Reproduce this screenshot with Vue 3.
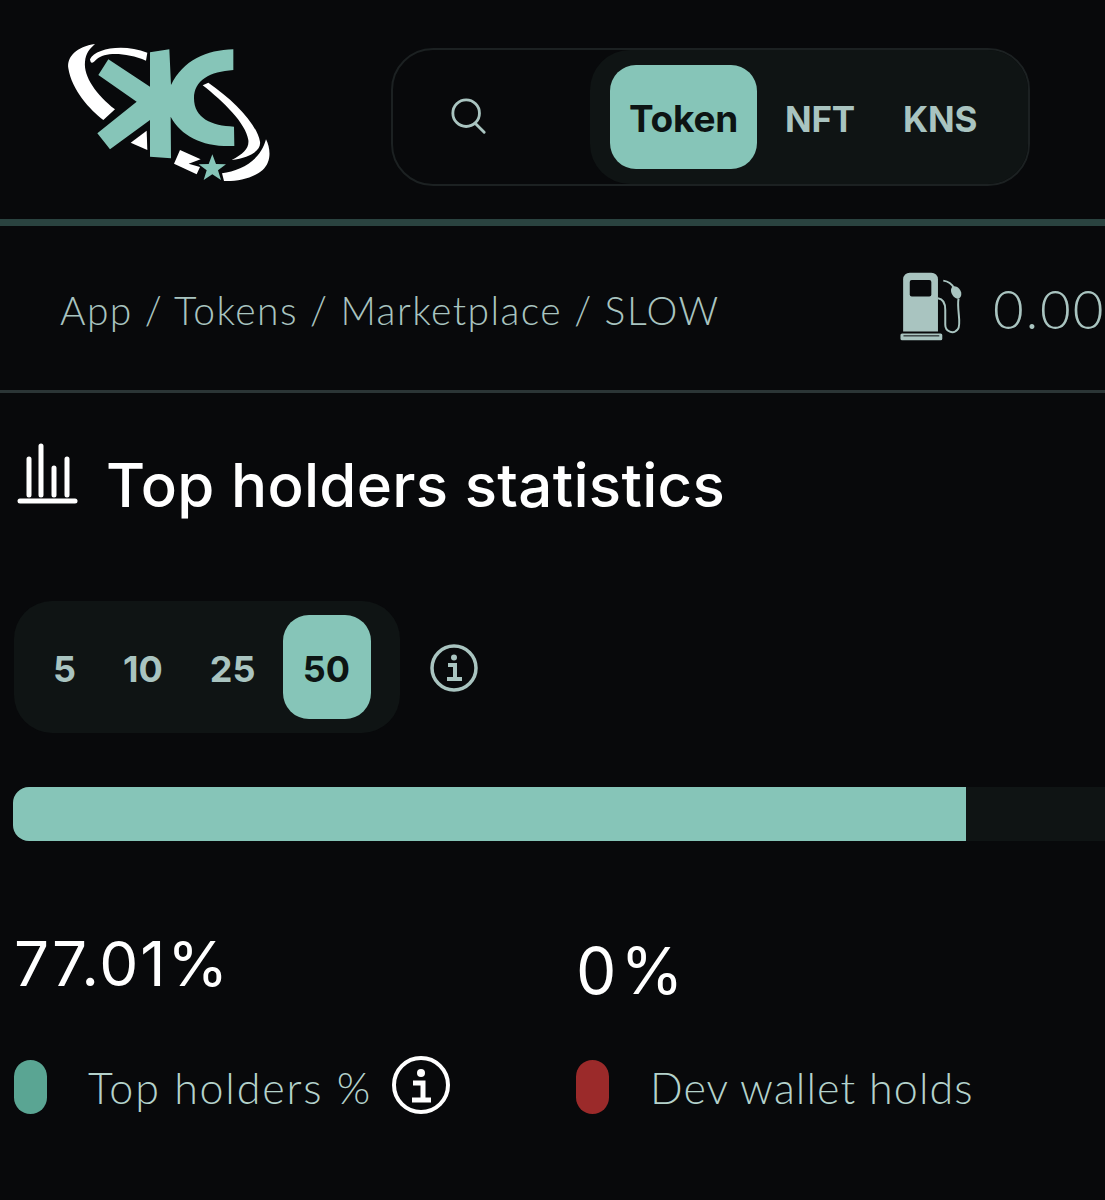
<script setup>
const tabs = [
  { label: 'Token', active: true },
  { label: 'NFT', active: false },
  { label: 'KNS', active: false }
]
const counts = [
  { label: '5', active: false },
  { label: '10', active: false },
  { label: '25', active: false },
  { label: '50', active: true }
]
const crumbs = 'App / Tokens / Marketplace / SLOW'
const progress = 87.27
</script>

<template>
  <div class="page">
    <header class="header">
      <svg class="logo" viewBox="0 0 780 570" aria-label="Logo">
        <g fill="#fff">
          <path d="M165 72C110 80 80 110 85 145C95 210 150 270 190 300L225 268C170 225 130 170 135 125C137 100 150 85 165 72Z" />
          <path d="M150 118C165 85 250 70 322 98L318 122C260 98 195 95 170 118C160 128 152 135 150 118Z" />
          <path d="M488 196L505 188C580 240 650 310 660 365C664 392 630 412 575 420C610 402 628 385 625 360C618 310 550 245 488 196Z" />
          <path d="M678 358C692 385 695 425 668 450C640 475 590 485 552 483L546 460C600 452 660 425 678 358Z" />
          <path d="M320 332L322 390L272 368Z" />
          <path d="M420 390L482 418L446 431L480 441L470 463L402 431Z" />
        </g>
        <g fill="#86c5b8">
          <path d="M205 118L330 200L330 97L388 88L393 195C430 120 500 90 580 88L580 150C510 155 462 180 462 235C462 295 515 318 582 320L583 378C490 382 425 350 392 290L393 415L330 410L330 300L210 388L172 340L290 245L175 165Z" />
          <path d="M517 403L528 432L558 433L534 451L543 480L517 463L491 480L500 451L476 433L506 432Z" />
        </g>
      </svg>

      <div class="searchbar">
        <div class="search-field">
          <svg class="search-icon" viewBox="0 0 40 40" fill="none" stroke="#a9c4c0" stroke-width="3" stroke-linecap="round">
            <circle cx="17" cy="16" r="14" />
            <path d="M27 27L36 36" />
          </svg>
        </div>
        <div class="tabs">
          <button v-for="tab in tabs" :key="tab.label" class="tab" :class="{ active: tab.active }">{{ tab.label }}</button>
        </div>
      </div>
    </header>

    <div class="crumbbar">
      <span class="crumbs">{{ crumbs }}</span>
      <div class="gas">
        <svg class="pump" viewBox="50 60 195 220">
          <path fill="#a9c4c0" d="M85 68H150A20 20 0 0 1 170 88V245H65V88A20 20 0 0 1 85 68Z" />
          <rect x="85" y="90" width="65" height="50" rx="6" fill="#08090b" />
          <rect x="57" y="251" width="126" height="21" rx="5" fill="#a9c4c0" />
          <rect x="66" y="257" width="108" height="3" fill="#08090b" />
          <path fill="none" stroke="#a9c4c0" stroke-width="6" d="M186 92C200 94 212 102 218 114M170 145C184 147 192 160 192 180V225C192 245 216 256 230 238C242 222 226 180 232 146" />
          <path fill="#a9c4c0" d="M212 112C222 104 236 114 240 128C242 142 234 148 226 146C214 142 204 122 212 112Z" />
        </svg>
        <span class="gas-value">0.00</span>
      </div>
    </div>

    <main class="content">
      <div class="title-row">
        <svg class="chart-icon" viewBox="16 443 62 62" fill="none" stroke="#fff" stroke-width="5" stroke-linecap="round">
          <path d="M29 459V495M41 446V495M54 468V495M67 459V495" />
          <path d="M20 501H75" />
        </svg>
        <h1>Top holders statistics</h1>
      </div>

      <div class="count-row">
        <div class="counts">
          <button v-for="c in counts" :key="c.label" class="count" :class="{ active: c.active }">{{ c.label }}</button>
        </div>
        <svg class="info info-muted" viewBox="0 0 48 48" fill="none">
          <circle cx="24" cy="24" r="22" stroke="#a9c4c0" stroke-width="3.5" />
          <circle cx="24" cy="13.5" r="3" fill="#a9c4c0" />
          <path d="M18 21H25V34M17 35H32" stroke="#a9c4c0" stroke-width="4" />
        </svg>
      </div>

      <div class="track">
        <div class="fill" :style="{ width: progress + '%' }"></div>
      </div>

      <div class="stats">
        <div class="stat">
          <div class="value">77.01%</div>
          <div class="legend">
            <span class="dot dot-teal"></span>
            <span class="legend-text legend-top">Top holders %</span>
            <svg class="info info-white" viewBox="0 0 58 58" fill="none">
              <circle cx="29" cy="29" r="27" stroke="#fff" stroke-width="4" />
              <circle cx="29" cy="17" r="4" fill="#fff" />
              <path d="M21 27H31V43M20 44H39" stroke="#fff" stroke-width="5" />
            </svg>
          </div>
        </div>
        <div class="stat stat-dev">
          <div class="value value-dev">0%</div>
          <div class="legend">
            <span class="dot dot-red"></span>
            <span class="legend-text legend-dev">Dev wallet holds</span>
          </div>
        </div>
      </div>
    </main>
  </div>
</template>

<style>
html, body { background: #08090b; }
</style>

<style scoped>
.page {
  width: 1105px;
  height: 1200px;
  overflow: hidden;
  background: #08090b;
  font-family: Lato, "Liberation Sans", sans-serif;
}
.header {
  display: flex;
  align-items: flex-start;
  height: 219px;
  padding: 20px 0 0 40px;
  box-sizing: border-box;
  position: relative;
}
.logo { width: 260px; height: 190px; flex: none; }
.searchbar {
  margin: 28px 0 0 91px;
  width: 639px;
  height: 138px;
  box-sizing: border-box;
  border: 2px solid #1c2122;
  border-radius: 42px;
  display: flex;
  overflow: hidden;
  flex: none;
}
.search-field {
  width: 197px;
  display: flex;
  align-items: center;
  padding-left: 57px;
  box-sizing: border-box;
  flex: none;
}
.search-icon { width: 38px; height: 38px; }
.tabs {
  flex: 1;
  display: flex;
  align-items: center;
  background: #0f1414;
  border-radius: 40px 0 0 40px;
  padding-left: 20px;
  gap: 8px;
}
.tab {
  font: 700 35px Inter, sans-serif;
  letter-spacing: -0.2px;
  color: #a9c4c0;
  background: none;
  border: 0;
  padding: 3px 20px 0;
}
.tab.active {
  width: 147px;
  height: 104px;
  padding: 3px 0 0;
  font-size: 37px;
  background: #86c5b8;
  color: #0d1413;
  border-radius: 26px;
}
.crumbbar {
  display: flex;
  align-items: center;
  justify-content: space-between;
  height: 174px;
  box-sizing: border-box;
  padding-left: 60px;
  border-top: 7px solid #2a4340;
  border-bottom: 3px solid #2b3536;
  white-space: nowrap;
}
.crumbs { font-size: 39px; font-weight: 300; color: #a9c4c0; letter-spacing: 1.45px; padding-top: 3px; }
.gas { display: flex; align-items: center; gap: 30px; margin-right: -30px; flex: none; width: 237px; }
.pump { width: 65px; height: 73px; flex: none; margin-top: -4px; }
.gas-value { font-size: 53px; font-weight: 300; color: #a9c4c0; letter-spacing: 2px; }
.content { padding: 0 0 0 14px; }
.title-row {
  display: flex;
  align-items: center;
  gap: 28px;
  margin-top: 57px;
  height: 70px;
}
.chart-icon { width: 62px; height: 62px; flex: none; margin: -7px 0 0 2px; align-self: flex-start; }
h1 {
  margin: 0;
  font: 500 60px Inter, sans-serif;
  letter-spacing: 0.3px;
  color: #fff;
}
.count-row {
  display: flex;
  align-items: center;
  gap: 30px;
  margin-top: 81px;
}
.counts {
  width: 386px;
  height: 132px;
  box-sizing: border-box;
  background: #0f1414;
  border-radius: 38px;
  display: flex;
  align-items: center;
  padding-left: 19px;
  gap: 7px;
}
.count {
  font: 700 36px Inter, sans-serif;
  color: #a9c4c0;
  background: none;
  border: 0;
  padding: 3px 20px 0;
}
.count.active {
  width: 88px;
  height: 104px;
  padding: 3px 0 0;
  background: #86c5b8;
  color: #0d1413;
  border-radius: 26px;
}
.info { flex: none; }
.info-muted { width: 48px; height: 48px; margin-top: 2px; }
.info-white { width: 58px; height: 58px; margin: -5px 0 0 20px; }
.track {
  margin-top: 54px;
  height: 54px;
  margin-left: -1px;
  background: #0f1414;
  border-radius: 16px 0 0 16px;
  overflow: hidden;
}
.fill { height: 100%; background: #86c5b8; }
.stats { display: flex; margin-top: 88px; }
.stat { width: 562px; flex: none; }
.value { font: 400 62px Inter, sans-serif; letter-spacing: 1.8px; color: #fff; line-height: 70px; }
.value-dev { margin-top: 7px; font-size: 64px; letter-spacing: 4px; }
.legend { display: flex; align-items: center; margin-top: 59px; height: 58px; }
.value-dev + .legend { margin-top: 52px; }
.dot { width: 33px; height: 54px; border-radius: 17px; flex: none; margin-right: 41px; }
.dot-teal { background: #5aa593; }
.dot-red { background: #9b2a2a; }
.legend-text { font-size: 43px; font-weight: 300; color: #b4d2cb; white-space: nowrap; padding-top: 1px; }
.legend-top { letter-spacing: 1.8px; }
.legend-dev { letter-spacing: 1.1px; }
</style>
